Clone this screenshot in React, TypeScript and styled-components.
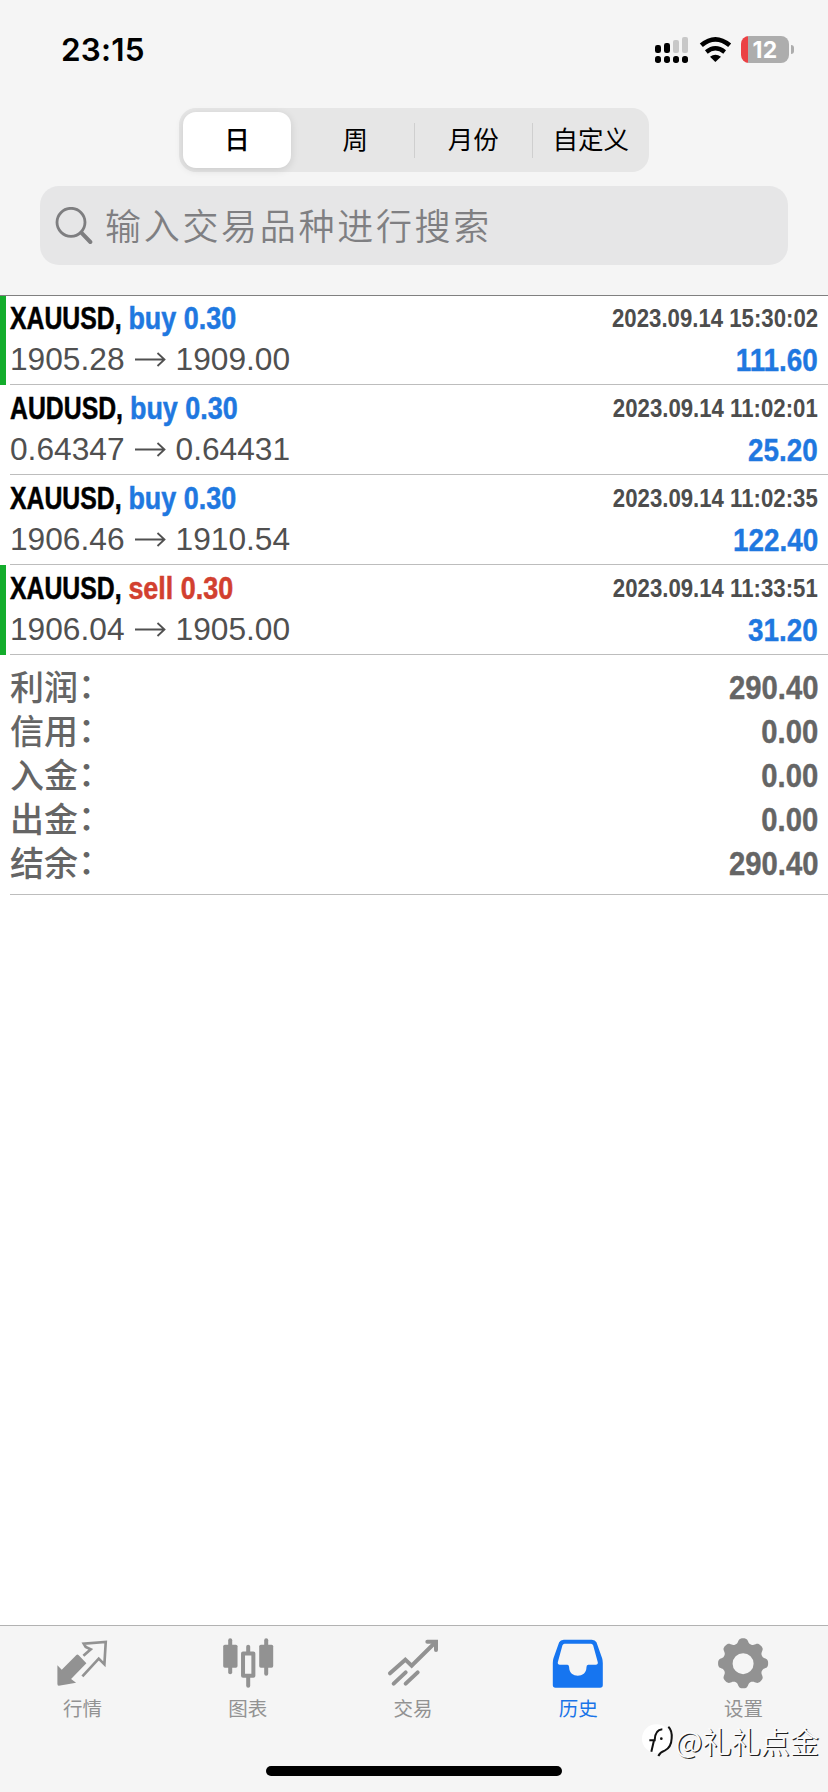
import React from "react";
import styled, { createGlobalStyle } from "styled-components";

const GlobalStyle = createGlobalStyle`
  * { box-sizing: border-box; }
  html, body { margin: 0; padding: 0; background: #fff; }
  svg { display: block; flex: none; }
`;

const cjk = `"Noto Sans CJK SC", sans-serif`;
const sans = `"Liberation Sans", ${cjk}`;

const Screen = styled.div`
  position: relative;
  width: 828px;
  height: 1792px;
  display: flex;
  flex-direction: column;
  background: #fff;
  overflow: hidden;
  font-family: ${cjk};
`;

const Header = styled.header`
  height: 296px;
  flex: none;
  display: flex;
  flex-direction: column;
  background: #f5f5f5;
  border-bottom: 1px solid #808080;
`;

const StatusBar = styled.div`
  height: 108px;
  padding: 35px 34px 0 61px;
  display: flex;
  justify-content: space-between;
  align-items: flex-start;
`;

const Clock = styled.span`
  font: 600 31.5px/30px Inter, sans-serif;
  letter-spacing: 0.2px;
  color: #000;
`;

const StatusIcons = styled.div`
  height: 29px;
  display: flex;
  align-items: center;
`;

const Battery = styled.div`
  width: 48px;
  height: 27px;
  margin-left: 9px;
  border-radius: 8px;
  background: linear-gradient(90deg, #eb4144 6.5px, #adadad 6.5px);
  color: #fff;
  font: 700 23px/28px Inter, sans-serif;
  letter-spacing: 0.4px;
  text-align: center;
`;

const BatteryCap = styled.div`
  width: 3px;
  height: 9px;
  margin-left: 2px;
  border-radius: 0 3px 3px 0;
  background: #adadad;
`;

const Segments = styled.div`
  width: 470px;
  height: 64px;
  margin-left: 179px;
  display: flex;
  align-items: center;
  border-radius: 17px;
  background: #e6e6e6;
`;

const Segment = styled.div<{ $selected?: boolean; $divided?: boolean }>`
  flex: none;
  width: 117.5px;
  height: ${(p) => (p.$divided ? "35px" : "56px")};
  padding-bottom: 5px;
  display: flex;
  align-items: center;
  justify-content: center;
  font-size: 25.5px;
  font-weight: ${(p) => (p.$selected ? 500 : 400)};
  line-height: 35px;
  color: #000;
  ${(p) => p.$divided && "border-left: 1.5px solid #cfcfcf;"}
  ${(p) =>
    p.$selected &&
    `width: 108px;
     margin: 0 5.5px 0 4px;
     border-radius: 13px;
     background: #fff;
     box-shadow: 0 2px 8px rgba(0, 0, 0, 0.12);`}
`;

const SearchField = styled.div`
  height: 79px;
  margin: 14px 40px 0;
  padding-left: 15px;
  display: flex;
  align-items: center;
  gap: 12px;
  border-radius: 19px;
  background: #e6e6e7;
`;

const Placeholder = styled.span`
  padding-bottom: 4px;
  color: #7f7f82;
  font-size: 36px;
  font-weight: 350;
  line-height: 50px;
  letter-spacing: 2.7px;
`;

const DealRow = styled.div<{ $first?: boolean; $marked?: boolean }>`
  height: ${(p) => (p.$first ? 89 : 90)}px;
  display: flex;
  border-left: ${(p) => (p.$marked ? 6 : 0)}px solid #14ad2c;
  padding-left: ${(p) => (p.$marked ? 4 : 10)}px;
`;

const DealBody = styled.div<{ $first?: boolean }>`
  flex: 1;
  padding: ${(p) => (p.$first ? 2 : 3)}px 10px 0 0;
  border-bottom: 1px solid #bdbdbd;
`;

const Line = styled.div`
  height: 41px;
  display: flex;
  justify-content: space-between;
  align-items: center;
  white-space: pre;
`;

const Symbol = styled.span`
  font: 700 31px/41px ${sans};
  color: #000;
  -webkit-text-stroke: 0.5px currentColor;
  transform: scaleX(0.8);
  transform-origin: left;
`;

const Side = styled.span<{ $sell?: boolean }>`
  display: inline-block;
  color: ${(p) => (p.$sell ? "#d2402f" : "#1f78e0")};
  transform: scaleX(1.085);
  transform-origin: left;
`;

const Time = styled.span`
  font: 700 25px/41px ${sans};
  color: #4d4d4d;
  transform: scaleX(0.888);
  transform-origin: right;
`;

const Prices = styled.span`
  display: flex;
  align-items: center;
  gap: 10px;
  font: 400 31.7px/41px ${sans};
  color: #505050;
`;

const Profit = styled.span`
  padding-top: 1px;
  font: 700 31.5px/41px ${sans};
  color: #1f78e0;
  -webkit-text-stroke: 0.4px currentColor;
  transform: scaleX(0.885);
  transform-origin: right;
`;

const Summary = styled.div`
  height: 240px;
  margin-left: 10px;
  padding: 10px 10px 0 0;
  border-bottom: 1px solid #bdbdbd;
`;

const SummaryRow = styled.div`
  height: 44px;
  display: flex;
  justify-content: space-between;
  align-items: center;
  color: #656565;
`;

const SummaryLabel = styled.span`
  padding-bottom: 2px;
  font: 500 34px/42px ${cjk};
`;

const Colon = styled.span`
  line-height: 0;
  vertical-align: 2.5px;
`;

const SummaryValue = styled.span`
  padding-top: 1px;
  font: 700 33.5px/43px ${sans};
  -webkit-text-stroke: 0.4px currentColor;
  transform: scaleX(0.873);
  transform-origin: right;
`;

const TabBar = styled.nav`
  height: 167px;
  margin-top: auto;
  padding-right: 2px;
  display: flex;
  background: #f5f5f5;
  border-top: 1px solid #b2b2b2;
`;

const Tab = styled.div<{ $active?: boolean }>`
  flex: 1;
  padding-top: 11px;
  display: flex;
  flex-direction: column;
  align-items: center;
  color: ${(p) => (p.$active ? "#1974e8" : "#929292")};
  font-size: 19.5px;
  line-height: 28px;
  gap: 5px;
`;

const HomeIndicator = styled.div`
  position: absolute;
  left: 266px;
  bottom: 16px;
  width: 296px;
  height: 10px;
  border-radius: 5px;
  background: #000;
`;

const Watermark = styled.div`
  position: absolute;
  right: 9px;
  bottom: 32px;
  display: flex;
  align-items: center;
  gap: 1px;
  color: #fbfbfb;
  font-size: 29.2px;
  font-weight: 350;
  line-height: 40px;
  text-shadow: 1.2px 1.2px 0.5px #222;
`;

const SignalIcon = () => (
  <svg width="35" height="28" viewBox="720 108 105 84">
    <rect x="723" y="135" width="18" height="24" rx="7" />
    <rect x="750" y="129" width="18" height="30" rx="7" />
    <rect x="777" y="120" width="18" height="39" rx="6" fill="#c8c8c8" />
    <rect x="804" y="111" width="18" height="48" rx="6" fill="#c8c8c8" />
    {[723, 750, 777, 804].map((x) => (
      <rect key={x} x={x} y="168" width="18" height="21" rx="8" />
    ))}
  </svg>
);

const WifiSvg = styled.svg`
  margin-left: 10px;
`;

const WifiIcon = () => (
  <WifiSvg width="33" height="27" viewBox="855 106 99 81">
    <path d="M862 134Q904 98 947 134" fill="none" stroke="#000" strokeWidth="14" />
    <path d="M877 154Q904 132 932 154" fill="none" stroke="#000" strokeWidth="13" />
    <path d="M888 168Q904 157 921 168L904 184Z" />
  </WifiSvg>
);

const SearchIcon = () => (
  <svg width="38" height="38" viewBox="165 617 114 114" fill="none" stroke="#7e7e80">
    <circle cx="213" cy="663" r="42" strokeWidth="8.5" />
    <path d="M244 694L271 722" strokeWidth="12" strokeLinecap="round" />
  </svg>
);

const ArrowIcon = () => (
  <svg width="31" height="18" viewBox="0 0 31 18" fill="none" stroke="#505050" strokeWidth="1.8">
    <path d="M0 8.5H29M22.5 2L29.5 8.5L22.5 15" />
  </svg>
);

const QuotesIcon = () => (
  <svg width="52" height="52" viewBox="169.8 82 156 156" fill="currentColor">
    <path d="M171 167L184 180L228 136Q231 133 235 137L258 161L212 208L227 219Q202 224 175 228Q171 228 171 223Z" />
    <path
      d="M249 138L271 119L256 112L250 102L316 97L312 164L295 147L246 200"
      fill="none"
      stroke="currentColor"
      strokeWidth="8"
    />
  </svg>
);

const ChartIcon = () => (
  <svg width="52" height="52" viewBox="665.4 82 156 156" fill="currentColor">
    <rect x="684" y="86" width="12" height="108" rx="6" />
    <rect x="669" y="105" width="43" height="69" rx="5" />
    <rect x="792" y="86" width="12" height="112" rx="6" />
    <rect x="777" y="105" width="42" height="69" rx="5" />
    <rect x="738" y="105" width="12" height="28" rx="6" />
    <rect x="738" y="196" width="12" height="38" rx="6" />
    <rect
      x="728.5"
      y="131.5"
      width="31"
      height="67"
      fill="none"
      stroke="currentColor"
      strokeWidth="12"
      strokeLinejoin="round"
    />
  </svg>
);

const TradeIcon = () => (
  <svg
    width="52"
    height="52"
    viewBox="261 82 156 156"
    fill="none"
    stroke="currentColor"
    strokeWidth="12"
    strokeLinecap="round"
  >
    <path d="M270 191L316 150L335 168L404 100" />
    <path d="M382 96H408V121" />
    <path d="M281 222L317 188M317 222L353 188" />
  </svg>
);

const HistoryIcon = () => (
  <svg width="52" height="52" viewBox="756.6 82 156 156" fill="#1675f0">
    <path
      fillRule="evenodd"
      d="M792 90H876Q886 90 890 98L907 146Q909 152 909 160V226Q909 234 901 234H767Q759 234 759 226V160Q759 152 761 146L778 98Q782 90 792 90ZM794 102Q790 102 788 107L774 158Q773 165 780 165H803Q808 166 808 173C808 207 860 207 860 173Q860 166 865 165H888Q895 165 894 158L880 107Q878 102 874 102Z"
    />
  </svg>
);

const gearPath = (() => {
  const points: string[] = [];
  for (let i = 0; i < 240; i++) {
    const a = (i / 240) * Math.PI * 2;
    const r = 67.5 + 8 * Math.tanh(Math.cos(a * 8) * 1.5 + 0.3);
    points.push(`${(430.5 + r * Math.cos(a)).toFixed(1)} ${(161 + r * Math.sin(a)).toFixed(1)}`);
  }
  return `M${points.join("L")}Z`;
})();

const SettingsIcon = () => (
  <svg width="52" height="52" viewBox="352.2 82 156 156" fill="currentColor">
    <path fillRule="evenodd" d={`${gearPath}M399 162A31.5 31.5 0 1 0 462 162A31.5 31.5 0 1 0 399 162Z`} />
  </svg>
);

const WatermarkIcon = () => (
  <svg width="32" height="34" viewBox="122 350 96 102" fill="none">
    <circle cx="165" cy="397" r="43" fill="#fff" />
    <path d="M150 436L158 402M144 402H160Q161 370 183 369" stroke="#111" strokeWidth="6" />
    <path d="M201 361Q213 372 211 396Q210 424 190 433Q176 438 171 449" stroke="#111" strokeWidth="6" />
    <circle cx="180" cy="397" r="4" fill="#111" />
  </svg>
);

const deals = [
  { symbol: "XAUUSD", side: "buy", open: "1905.28", close: "1909.00", time: "2023.09.14 15:30:02", profit: "111.60", marked: true },
  { symbol: "AUDUSD", side: "buy", open: "0.64347", close: "0.64431", time: "2023.09.14 11:02:01", profit: "25.20", marked: false },
  { symbol: "XAUUSD", side: "buy", open: "1906.46", close: "1910.54", time: "2023.09.14 11:02:35", profit: "122.40", marked: false },
  { symbol: "XAUUSD", side: "sell", open: "1906.04", close: "1905.00", time: "2023.09.14 11:33:51", profit: "31.20", marked: true },
];

const totals = [
  ["利润", "290.40"],
  ["信用", "0.00"],
  ["入金", "0.00"],
  ["出金", "0.00"],
  ["结余", "290.40"],
];

const tabs = [
  { label: "行情", Icon: QuotesIcon },
  { label: "图表", Icon: ChartIcon },
  { label: "交易", Icon: TradeIcon },
  { label: "历史", Icon: HistoryIcon, active: true },
  { label: "设置", Icon: SettingsIcon },
];

export default function App() {
  return (
    <Screen>
      <GlobalStyle />
      <Header>
        <StatusBar>
          <Clock>23:15</Clock>
          <StatusIcons>
            <SignalIcon />
            <WifiIcon />
            <Battery>12</Battery>
            <BatteryCap />
          </StatusIcons>
        </StatusBar>
        <Segments>
          <Segment $selected>日</Segment>
          <Segment>周</Segment>
          <Segment $divided>月份</Segment>
          <Segment $divided>自定义</Segment>
        </Segments>
        <SearchField>
          <SearchIcon />
          <Placeholder>输入交易品种进行搜索</Placeholder>
        </SearchField>
      </Header>
      <main>
        {deals.map((d, i) => (
          <DealRow key={d.time} $first={i === 0} $marked={d.marked}>
            <DealBody $first={i === 0}>
              <Line>
                <Symbol>
                  {d.symbol}, <Side $sell={d.side === "sell"}>{d.side} 0.30</Side>
                </Symbol>
                <Time>{d.time}</Time>
              </Line>
              <Line>
                <Prices>
                  {d.open}
                  <ArrowIcon />
                  {d.close}
                </Prices>
                <Profit>{d.profit}</Profit>
              </Line>
            </DealBody>
          </DealRow>
        ))}
        <Summary>
          {totals.map(([label, value]) => (
            <SummaryRow key={label}>
              <SummaryLabel>
                {label}
                <Colon>：</Colon>
              </SummaryLabel>
              <SummaryValue>{value}</SummaryValue>
            </SummaryRow>
          ))}
        </Summary>
      </main>
      <TabBar>
        {tabs.map(({ label, Icon, active }) => (
          <Tab key={label} $active={active}>
            <Icon />
            {label}
          </Tab>
        ))}
      </TabBar>
      <HomeIndicator />
      <Watermark>
        <WatermarkIcon />
        @礼礼点金
      </Watermark>
    </Screen>
  );
}
